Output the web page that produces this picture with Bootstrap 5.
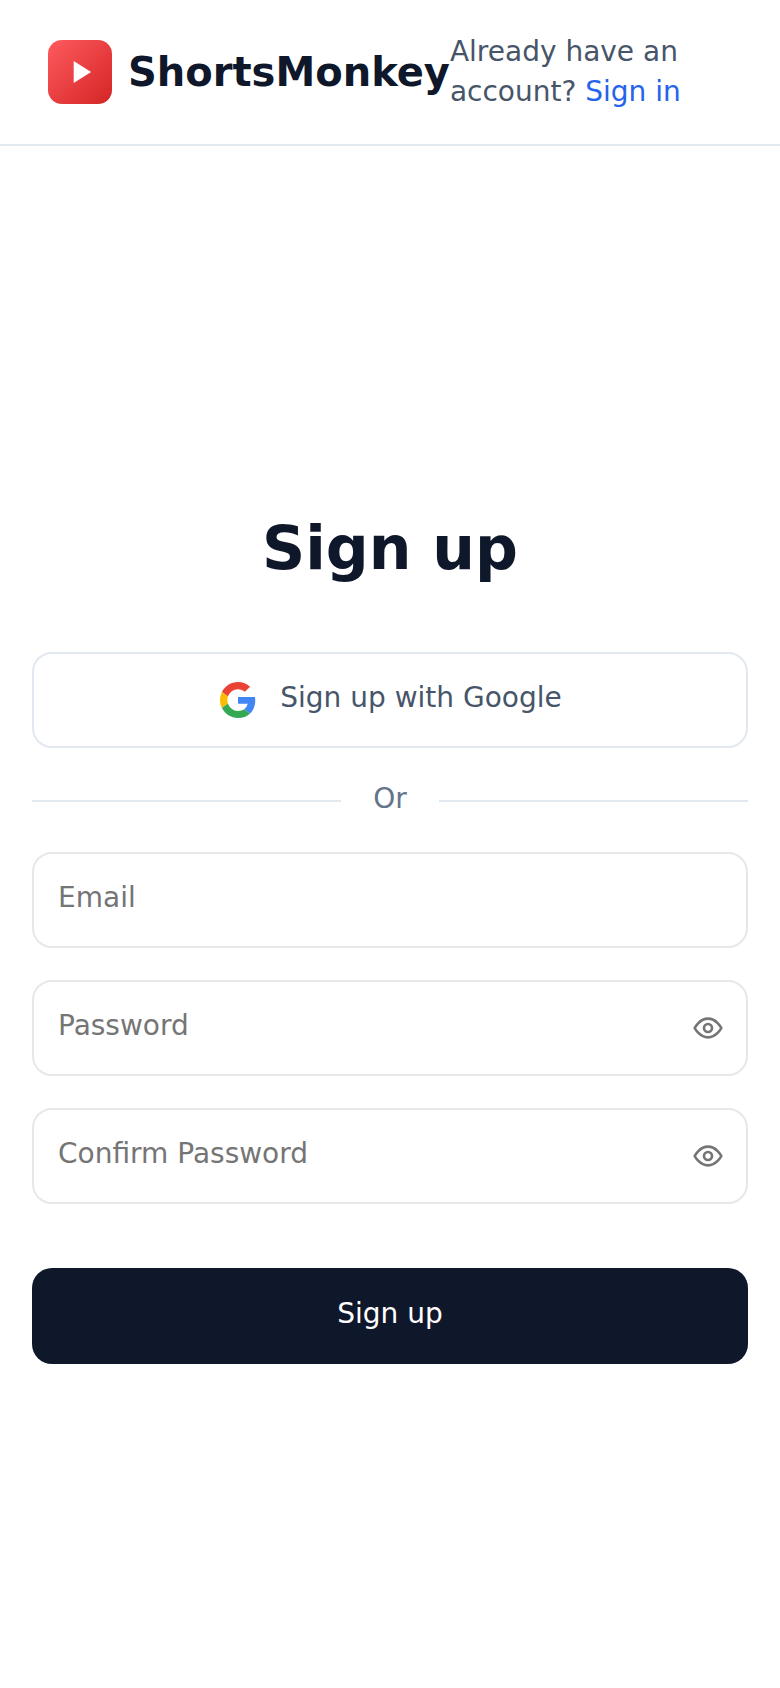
<!DOCTYPE html>
<html lang="en">
<head>
    <meta charset="UTF-8">
    <meta name="viewport" content="width=device-width, initial-scale=1.0">
    <title>Sign up</title>
    <link href="https://cdn.jsdelivr.net/npm/bootstrap@5.3.3/dist/css/bootstrap.min.css" rel="stylesheet">
    <style>
        body {
            font-family: "DejaVu Sans", sans-serif;
            background: #fff;
            color: #0f172a;
        }
        .top-head {
            height: 146px;
            padding: 0 48px;
            border-bottom: 2px solid #e2e8f0;
        }
        .logo-box {
            width: 64px;
            height: 64px;
            border-radius: 14px;
            background: linear-gradient(135deg, #ff5a5f, #d32525);
        }
        .brand-name {
            font-size: 40px;
            font-weight: 700;
            line-height: 48px;
            color: #0f172a;
        }
        .head-text {
            font-size: 28px;
            line-height: 40px;
            color: #475569;
            width: 240px;
        }
        .head-text a {
            color: #2563eb;
            text-decoration: none;
        }
        .form-wrap {
            padding: 366px 32px 0;
        }
        .page-title {
            font-size: 60px;
            line-height: 72px;
            font-weight: 700;
            color: #0f172a;
            margin-bottom: 68px;
        }
        .google-btn {
            height: 96px;
            border: 2px solid #e2e8f0;
            border-radius: 20px;
            font-size: 28px;
            color: #475569;
            background: #fff;
            padding: 0 0 4px 2px;
        }
        .google-icon {
            margin-top: 4px;
        }
        .or-row {
            margin: 32px 0;
            height: 40px;
            font-size: 28px;
            color: #64748b;
        }
        .or-text {
            padding: 0 32px 3px;
        }
        .or-line {
            height: 2px;
            margin-top: 2px;
            background: #e2e8f0;
        }
        .field-input {
            height: 96px;
            border: 2px solid #e5e7eb;
            border-radius: 20px;
            padding: 0 24px 6px;
            font-size: 28px;
            color: #0f172a;
        }
        .field-input::placeholder {
            color: #757575;
        }
        .field-stack {
            gap: 32px;
        }
        .eye-btn {
            right: 24px;
            top: 32px;
            width: 32px;
            height: 32px;
        }
        .submit-btn {
            height: 96px;
            margin-top: 64px;
            border-radius: 20px;
            background: #0f172a;
            color: #fff;
            font-size: 28px;
            border: 0;
            padding-bottom: 6px;
        }
    </style>
</head>
<body>
    <header class="top-head d-flex align-items-center">
        <div class="d-flex align-items-center gap-3 flex-shrink-0">
            <div class="logo-box d-flex align-items-center justify-content-center flex-shrink-0">
                <svg width="38" height="38" viewBox="0 0 24 24"><polygon points="8,5 19,12 8,19" fill="#fff"/></svg>
            </div>
            <span class="brand-name">ShortsMonkey</span>
        </div>
        <div class="head-text flex-shrink-0">Already have an account? <a href="#">Sign in</a></div>
    </header>
    <main class="form-wrap">
        <h1 class="page-title text-center">Sign up</h1>
        <button type="button" class="google-btn w-100 d-flex align-items-center justify-content-center gap-4">
            <svg class="google-icon" width="36" height="36" viewBox="0 0 48 48">
                <path fill="#EA4335" d="M24 9.500c3.500 0 6.700 1.200 9.200 3.600l6.900-6.900C35.900 2.400 30.500 0 24 0 14.600 0 6.500 5.400 2.600 13.200l8 6.200C12.500 13.600 17.800 9.500 24 9.500z"/>
                <path fill="#4285F4" d="M47 24.500c0-1.600-.1-3.100-.4-4.500H24v9h12.900c-.6 3-2.200 5.500-4.700 7.200l7.700 6C44.400 38 47 31.800 47 24.500z"/>
                <path fill="#FBBC05" d="M10.600 28.600c-.5-1.400-.8-3-.8-4.600s.3-3.200.8-4.600l-8-6.200C.9 16.500 0 20.100 0 24s.9 7.500 2.600 10.800l8-6.200z"/>
                <path fill="#34A853" d="M24 48c6.500 0 11.900-2.100 15.900-5.800l-7.700-6c-2.200 1.500-4.900 2.300-8.200 2.300-6.200 0-11.500-4.100-13.400-9.900l-8 6.200C6.500 42.600 14.600 48 24 48z"/>
            </svg>
            <span>Sign up with Google</span>
        </button>
        <div class="or-row d-flex align-items-center">
            <div class="or-line flex-grow-1"></div>
            <span class="or-text">Or</span>
            <div class="or-line flex-grow-1"></div>
        </div>
        <div class="d-flex flex-column field-stack">
            <input type="email" class="field-input w-100" placeholder="Email">
            <div class="position-relative">
                <input type="password" class="field-input w-100" placeholder="Password">
                <svg class="eye-btn position-absolute" viewBox="0 0 24 24" fill="none" stroke="#757575" stroke-width="2" stroke-linecap="round" stroke-linejoin="round"><path d="M2 12s3.600-7 10-7 10 7 10 7-3.600 7-10 7-10-7-10-7z"/><circle cx="12" cy="12" r="3"/></svg>
            </div>
            <div class="position-relative">
                <input type="password" class="field-input w-100" placeholder="Confirm Password">
                <svg class="eye-btn position-absolute" viewBox="0 0 24 24" fill="none" stroke="#757575" stroke-width="2" stroke-linecap="round" stroke-linejoin="round"><path d="M2 12s3.600-7 10-7 10 7 10 7-3.600 7-10 7-10-7-10-7z"/><circle cx="12" cy="12" r="3"/></svg>
            </div>
        </div>
        <button type="button" class="submit-btn w-100">Sign up</button>
    </main>
</body>
</html>
